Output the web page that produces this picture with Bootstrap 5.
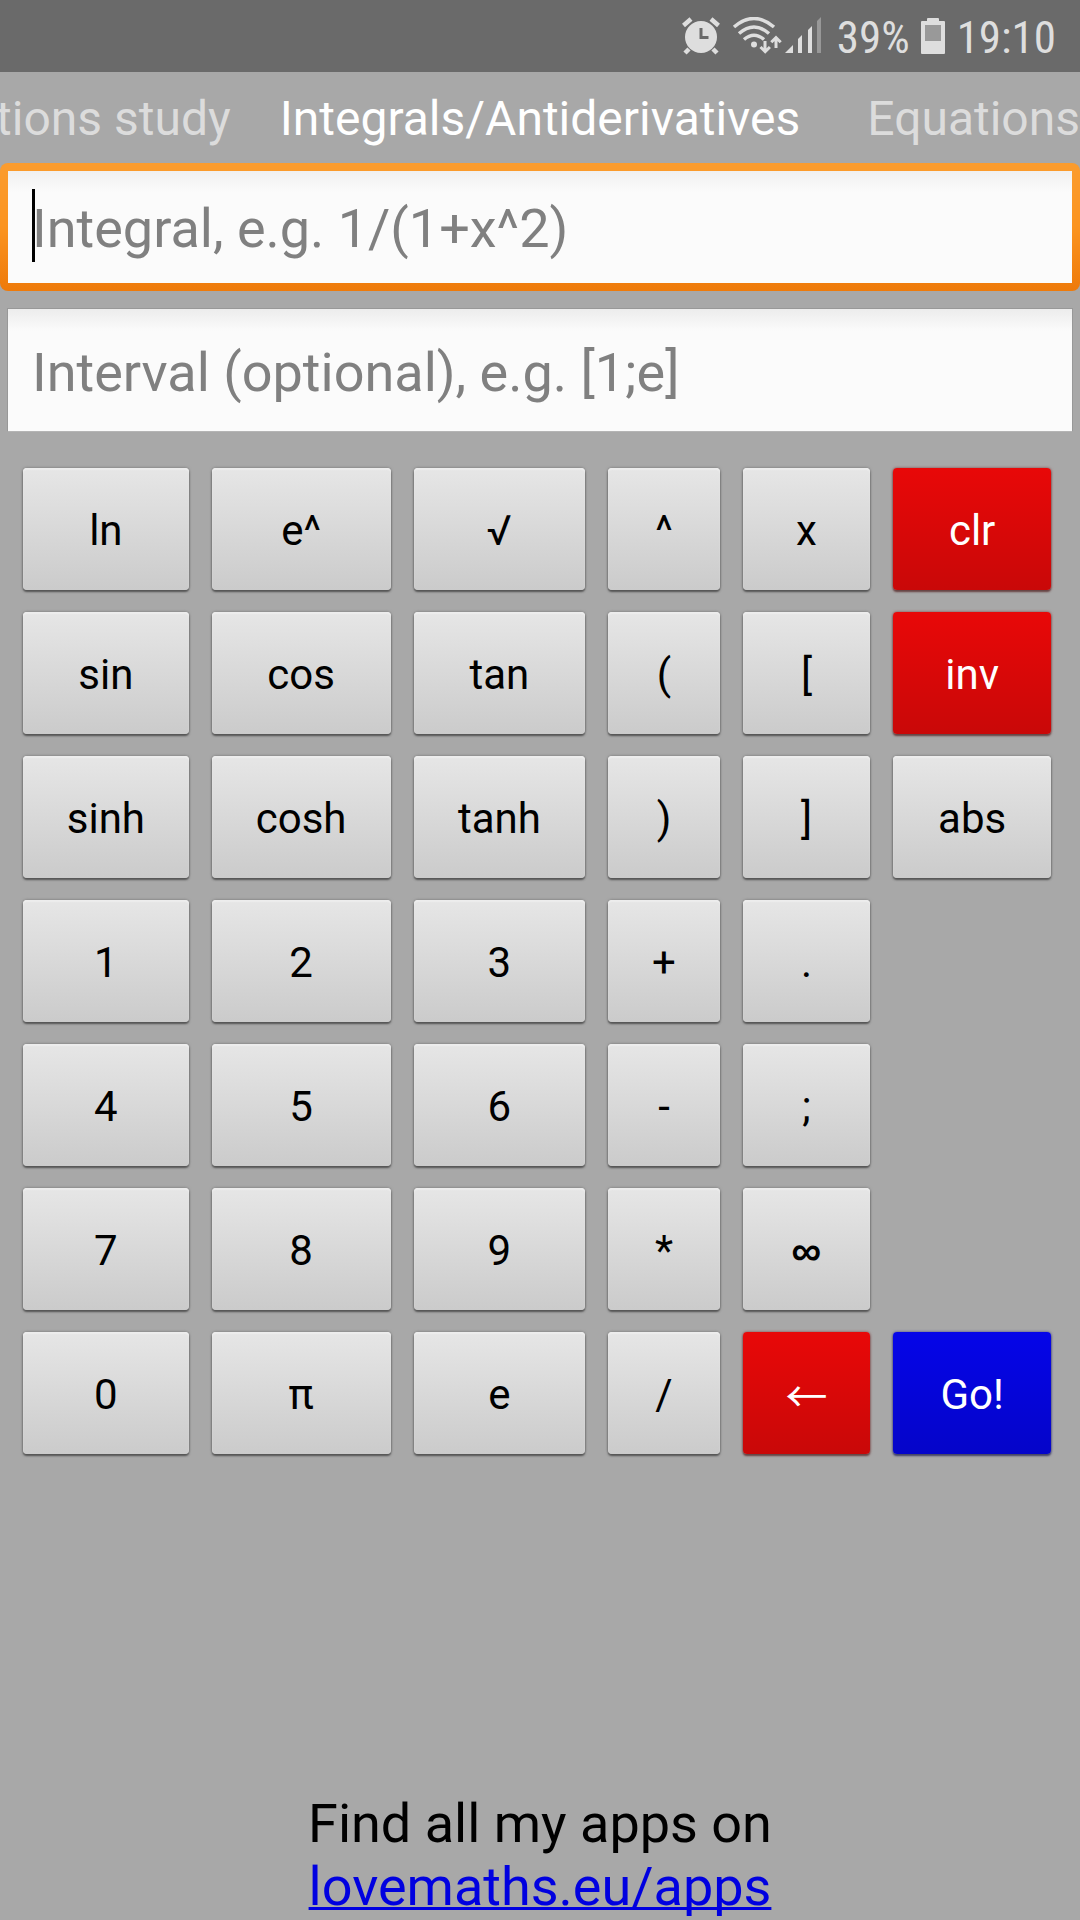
<!DOCTYPE html>
<html lang="en">
<head>
<meta charset="utf-8">
<meta name="viewport" content="width=device-width, initial-scale=1">
<title>Integrals/Antiderivatives</title>
<link href="https://cdn.jsdelivr.net/npm/bootstrap@5.3.0/dist/css/bootstrap.min.css" rel="stylesheet">
<style>
  body { background: #a8a8a8; color: #000; font-family: Roboto, "Noto Sans", sans-serif; }
  .status-strip { background: #6a6a6a; color: #dedede; height: 72px; padding-right: 24px; font-family: "Roboto Condensed", Roboto, sans-serif; font-size: 45px; line-height: 52px; }
  .status-strip svg { fill: currentColor; flex: none; }
  .status-pct { margin: 3px 11px 0 15px; }
  .status-time { margin: 3px 0 0 12px; }
  .tab-strip { font-size: 48px; line-height: 56px; padding: 19px 0 16px; white-space: nowrap; }
  .tab-strip a { color: #dcdcdc; text-decoration: none; }
  .tab-strip a.active { color: #fff; }
  .tab-side { flex: 1 1 0; min-width: 0; }
  .tab-prev a { margin-right: 49px; }
  .entry { display: block; width: 100%; font-size: 54px; line-height: 63px; color: #000; outline: 0; }
  .entry::placeholder { color: #808080; opacity: 1; }
  .entry-main { height: 128px; border: 8px solid transparent; border-radius: 8px; padding: 3px 24px 0; caret-color: transparent;
    background: linear-gradient(#f0f0f0, #fbfbfb 22px, #fbfbfb) padding-box, linear-gradient(#fb9c2e, #fb9420 50%, #ee7a0a) border-box; }
  .caret { left: 32px; top: 26px; width: 3px; height: 73px; background: #000; }
  .entry-wrap { padding: 17px 7px 0; }
  .entry-range { height: 124px; border: 1px solid #989898; border-bottom-color: #b4b4b4; padding: 4px 24px 0; background: linear-gradient(#ececec, #fbfbfb 22px, #fbfbfb); }
  .keypad { display: grid; grid-template-columns: 165fr 178fr 171fr 111fr 127fr 157fr; gap: 22px 23px; padding: 36px 29px 0 23px; }
  .key { height: 122px; border: 0; border-radius: 4px; padding: 3px 0 0; font-size: 42px; line-height: 49px; color: #000;
    background: linear-gradient(#e6e6e6, #cbcbcb); box-shadow: 0 2px 2px #555, 0 0 3px #707070, inset 0 2px 1px #ededed; }
  .key-red { color: #fff; background: linear-gradient(#e80808, #c90808); box-shadow: 0 2px 2px #644, 0 0 3px #844; }
  .key-blue { color: #fff; background: linear-gradient(#0505e8, #0505c9); box-shadow: 0 2px 2px #446, 0 0 3px #448; }
  .key-inf { font-family: "Liberation Sans", sans-serif; font-weight: 700; }
  .key-back { font-family: "Noto Sans CJK JP", sans-serif; padding: 0; }
  .col-last { grid-column: 6; }
  .col-first { grid-column: 1; }
  .foot { font-size: 54px; line-height: 63px; padding-bottom: 2px; }
  .foot a { color: #0000e0; text-decoration-thickness: 3px; text-decoration-skip-ink: none; }
</style>
<script src="https://cdn.jsdelivr.net/npm/bootstrap@5.3.0/dist/js/bootstrap.bundle.min.js"></script>
</head>
<body>
<div class="d-flex flex-column min-vh-100">
  <header class="status-strip d-flex justify-content-end align-items-center">
    <svg width="38" height="38" viewBox="0 0 38 38" aria-hidden="true">
      <circle cx="19" cy="20" r="16"/>
      <path d="M1.500 8.500 9 2M29 2l7.500 6.500M7 32l-4 4M31 32l4 4" stroke="currentColor" stroke-width="4.500" fill="none"/>
      <path d="M19 11v9.500h7.500" stroke="#6a6a6a" stroke-width="3" fill="none"/>
    </svg>
    <svg class="ms-2" width="56" height="38" viewBox="0 0 56 38" aria-hidden="true">
      <g fill="none" stroke="currentColor" stroke-width="3.500">
        <path d="M6 10Q26 -7 46 10M11 16.500Q26 3.500 41 16.500M16 22.500Q26 14 36 22.500"/>
        <path d="M37 24v10M32.500 30l4.700 4.700 4.700-4.700M48 31V21M43.300 25.200 48 20.500l4.700 4.700" stroke-width="3"/>
      </g>
      <circle cx="26" cy="27.500" r="3"/>
    </svg>
    <svg width="38" height="38" viewBox="0 0 38 38" aria-hidden="true">
      <path d="M1 36h8v-8zM14 36h4V18l-4 4zM24 36h4V9l-4 4z"/>
      <path d="M33 36h4V0l-4 4z" opacity=".4"/>
    </svg>
    <span class="status-pct">39%</span>
    <svg width="24" height="38" viewBox="0 0 24 38" aria-hidden="true">
      <path d="M6 4V2q0-1 1-1h10q1 0 1 1v2h5q1 0 1 1v31q0 1-1 1H1q-1 0-1-1V5q0-1 1-1z"/>
      <path d="M4 8h16v16H4z" fill="#999"/>
    </svg>
    <time class="status-time">19:10</time>
  </header>

  <nav class="tab-strip d-flex" aria-label="Sections">
    <div class="tab-side tab-prev d-flex justify-content-end overflow-hidden"><a href="#study">Functions study</a></div>
    <a class="active" href="#integrals" aria-current="page">Integrals/Antiderivatives</a>
    <div class="tab-side d-flex justify-content-end overflow-hidden"><a href="#equations">Equations</a></div>
  </nav>

  <main>
    <div class="position-relative">
      <label class="visually-hidden" for="integral">Integral</label>
      <input class="entry entry-main" id="integral" type="text" placeholder="Integral, e.g. 1/(1+x^2)">
      <span class="caret position-absolute" aria-hidden="true"></span>
    </div>
    <div class="entry-wrap">
      <label class="visually-hidden" for="interval">Interval</label>
      <input class="entry entry-range" id="interval" type="text" placeholder="Interval (optional), e.g. [1;e]">
    </div>
    <div class="keypad">
      <button class="key" type="button">ln</button>
      <button class="key" type="button">e^</button>
      <button class="key" type="button">√</button>
      <button class="key" type="button">^</button>
      <button class="key" type="button">x</button>
      <button class="key key-red" type="button">clr</button>
      <button class="key" type="button">sin</button>
      <button class="key" type="button">cos</button>
      <button class="key" type="button">tan</button>
      <button class="key" type="button">(</button>
      <button class="key" type="button">[</button>
      <button class="key key-red" type="button">inv</button>
      <button class="key" type="button">sinh</button>
      <button class="key" type="button">cosh</button>
      <button class="key" type="button">tanh</button>
      <button class="key" type="button">)</button>
      <button class="key" type="button">]</button>
      <button class="key" type="button">abs</button>
      <button class="key" type="button">1</button>
      <button class="key" type="button">2</button>
      <button class="key" type="button">3</button>
      <button class="key" type="button">+</button>
      <button class="key" type="button">.</button>
      <button class="key col-first" type="button">4</button>
      <button class="key" type="button">5</button>
      <button class="key" type="button">6</button>
      <button class="key" type="button">-</button>
      <button class="key" type="button">;</button>
      <button class="key col-first" type="button">7</button>
      <button class="key" type="button">8</button>
      <button class="key" type="button">9</button>
      <button class="key" type="button">*</button>
      <button class="key key-inf" type="button">∞</button>
      <button class="key col-first" type="button">0</button>
      <button class="key" type="button">π</button>
      <button class="key" type="button">e</button>
      <button class="key" type="button">/</button>
      <button class="key key-red key-back" type="button" aria-label="Backspace">←</button>
      <button class="key key-blue col-last" type="button">Go!</button>
    </div>
  </main>

  <footer class="foot text-center mt-auto">
    Find all my apps on<br><a href="#apps">lovemaths.eu/apps</a>
  </footer>
</div>
</body>
</html>
